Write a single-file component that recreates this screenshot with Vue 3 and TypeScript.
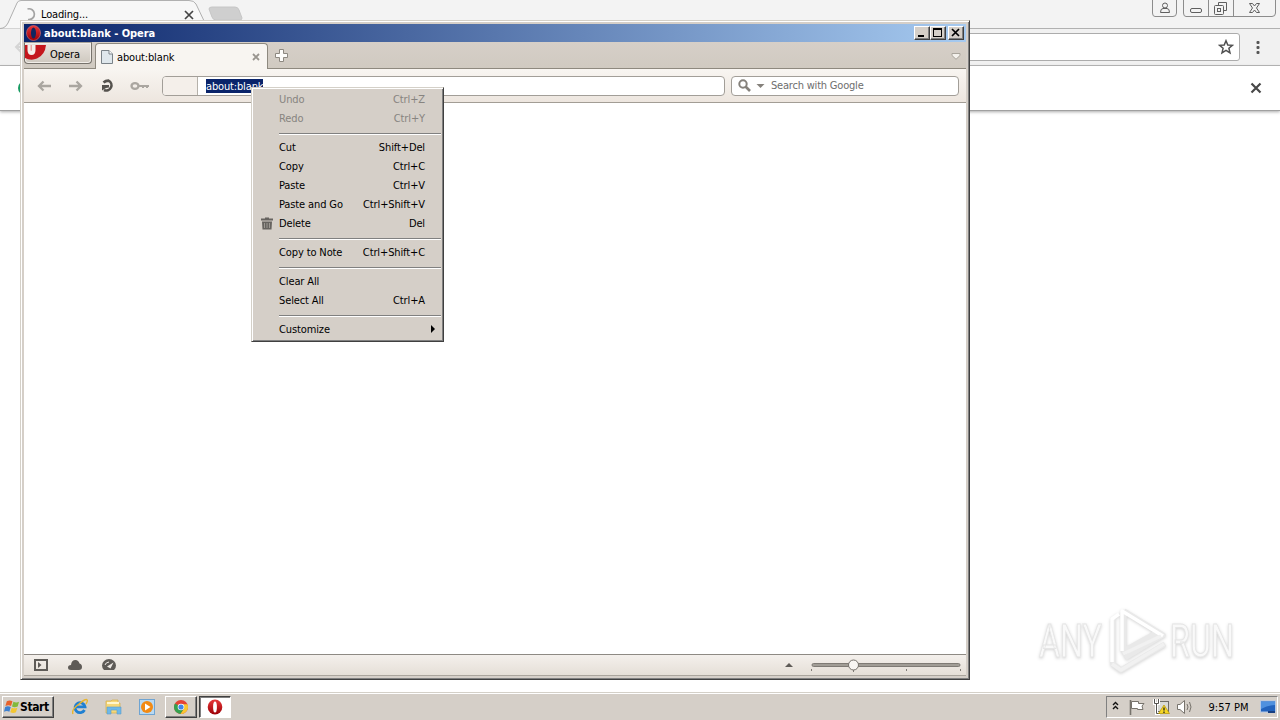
<script setup lang="ts">
interface Entry {
  label?: string
  keys?: string
  off?: boolean
  icon?: boolean
  sub?: boolean
  sep?: boolean
}

const menu: Entry[] = [
  { label: 'Undo', keys: 'Ctrl+Z', off: true },
  { label: 'Redo', keys: 'Ctrl+Y', off: true },
  { sep: true },
  { label: 'Cut', keys: 'Shift+Del' },
  { label: 'Copy', keys: 'Ctrl+C' },
  { label: 'Paste', keys: 'Ctrl+V' },
  { label: 'Paste and Go', keys: 'Ctrl+Shift+V' },
  { label: 'Delete', keys: 'Del', icon: true },
  { sep: true },
  { label: 'Copy to Note', keys: 'Ctrl+Shift+C' },
  { sep: true },
  { label: 'Clear All' },
  { label: 'Select All', keys: 'Ctrl+A' },
  { sep: true },
  { label: 'Customize', sub: true },
]
</script>

<template>
  <div class="desktop">
    <section class="chrome">
      <div class="strip">
        <svg class="strip-art" width="260" height="29" viewBox="0 0 260 29">
          <path d="M0 28.5 L3 28 Q6 27 8 23 L17 3 Q18 .5 21 .5 H189 Q194 .5 196 4 L206 25 Q207 28 210 28.5" fill="#f7f7f7" stroke="#b0b0b0" />
          <path d="M212 7 H235 Q238 7 239 10 L242 18 Q242 20 240 20 H216 Q213 20 212 17 L209 9 Q209 7 212 7Z" fill="#cfcfcf" stroke="#c6c6c6" />
          <path d="M27.500 9 A5.400 5.400 0 1 1 28 19.500" fill="none" stroke="#a3a3a3" stroke-width="1.700" />
          <path d="M185 11 L193 19 M193 11 L185 19" stroke="#444" stroke-width="1.700" />
        </svg>
        <span class="loading">Loading...</span>
        <svg class="caption" width="128" height="18" viewBox="0 0 128 18" fill="none" stroke="#8c8c8c">
          <path d="M.5 0 V13 Q.5 16.500 3 16.500 H21 Q24.500 16.500 24.500 13 V0 M31.500 0 V13 Q31.500 16.500 34 16.500 H120 Q123.500 16.500 123.500 13 V0 M56.500 0 V16 M81.500 0 V16" />
          <g stroke="#5f5f5f">
            <circle cx="13" cy="5.500" r="2.500" /><path d="M8.500 12.500 Q8.500 8.500 11 8.500 H15 Q17.500 8.500 17.500 12.500Z" />
            <rect x="38.500" y="8.500" width="11" height="4" rx="1.500" />
            <path d="M66.500 5.500 V2.500 H74.500 V10.500 H71.500" /><rect x="62.500" y="5.500" width="9" height="9" rx="1" /><rect x="65.500" y="8.500" width="3" height="3" />
            <path d="M97.500 3.500 H100.500 L102.500 6 L104.500 3.500 H107.500 L104.500 8 L107.500 12.500 H104.500 L102.500 10 L100.500 12.500 H97.500 L100.500 8Z" />
          </g>
        </svg>
      </div>
      <div class="cbar">
        <svg class="cback" width="20" height="20" viewBox="0 0 20 20"><path d="M11 3 L4 10 L11 17 M4 10 H18" fill="none" stroke="#d5d5d5" stroke-width="2" /></svg>
        <div class="cinput">
          <svg width="16" height="16" viewBox="0 0 16 16"><path d="M8 1.700 L9.800 6 L14.400 6.300 L10.900 9.300 L12 13.900 L8 11.400 L4 13.900 L5.100 9.300 L1.600 6.300 L6.200 6Z" fill="none" stroke="#505050" stroke-width="1.500" /></svg>
        </div>
        <svg class="dots" width="4" height="14" viewBox="0 0 4 14" fill="#555"><rect x=".5" y="0" width="3" height="3" rx="1" /><rect x=".5" y="5" width="3" height="3" rx="1" /><rect x=".5" y="10" width="3" height="3" rx="1" /></svg>
      </div>
      <div class="info">
        <i class="green"></i>
        <svg width="12" height="12" viewBox="0 0 12 12"><path d="M1.500 1.500 L10.500 10.500 M10.500 1.500 L1.500 10.500" stroke="#484848" stroke-width="2.200" /></svg>
      </div>
    </section>

    <svg class="mark" width="240" height="80" viewBox="0 0 240 80">
      <g fill="none" stroke-linejoin="round">
        <g stroke="#e9e9e9" stroke-width="5.500">
          <path d="M89 8 V49 L123 30 M89 9 L128 33 L90 56 M78 17 V62 L86 68 L130 42" />
        </g>
        <g stroke="#fff" stroke-width="3.500">
          <path d="M77 60 V17 L84 12 M87 49 V9 L128 34" /><path d="M77 62 L86 68 L129 42 M88 52 L126 34" stroke="#f1f1f1" />
        </g>
      </g>
      <g class="mark-text">
        <text x="4" y="55" textLength="63" lengthAdjust="spacingAndGlyphs">ANY</text>
        <text x="135" y="55" textLength="64" lengthAdjust="spacingAndGlyphs">RUN</text>
      </g>
    </svg>

    <section class="opera">
      <header class="title">
        <svg width="16" height="16" viewBox="0 0 16 16"><defs><linearGradient id="red" x2="0" y2="1"><stop stop-color="#e8383a" /><stop offset="1" stop-color="#9c0006" /></linearGradient></defs><ellipse cx="7.500" cy="8" rx="7" ry="7.500" fill="url(#red)" stroke="#d9777c" stroke-width=".6" /><ellipse cx="7.500" cy="8" rx="2.500" ry="5.500" fill="#102660" /></svg>
        <span class="title-text">about:blank - Opera</span>
        <div class="wbtns">
          <b><svg width="14" height="12" viewBox="0 0 14 12"><path d="M3 8h6v2H3z" /></svg></b>
          <b><svg width="14" height="12" viewBox="0 0 14 12"><path d="M2 1h9v9H2z M3 3v6h7V3z" fill-rule="evenodd" /></svg></b>
          <b class="x"><svg width="14" height="12" viewBox="0 0 14 12"><path d="M3 2 L10 9 M10 2 L3 9" stroke="#000" stroke-width="1.700" /></svg></b>
        </div>
      </header>
      <div class="tabs">
        <div class="obtn">
          <svg width="22" height="18" viewBox="0 0 22 18"><path d="M0 2 H21 Q20 12 12 15.500 Q6 18 0 15Z" fill="#c4161c" /><path d="M2.500 2 H10.500 V7 Q10.500 12 6.500 12 Q2.500 12 2.500 7Z" fill="#f4efea" /><path d="M5.500 2 H7 V7 Q7 8 6.300 8 Q5.500 8 5.500 7Z" fill="#e9a9a6" /></svg>
          <span>Opera</span>
        </div>
        <div class="tab">
          <svg width="12" height="14" viewBox="0 0 12 14"><path d="M.5 .5 H8 L11.500 4 V13.500 H.5Z" fill="#dfe7ec" stroke="#7a8288" /><path d="M8 .5 V4 H11.500" fill="#fff" stroke="#7a8288" /></svg>
          <span>about:blank</span>
          <svg class="tx" width="8" height="8" viewBox="0 0 8 8"><path d="M1 1 L7 7 M7 1 L1 7" stroke="#99958f" stroke-width="1.800" /></svg>
        </div>
        <svg class="plus" width="13" height="13" viewBox="0 0 13 13"><path d="M4.500 .5 H8.500 V4.500 H12.500 V8.500 H8.500 V12.500 H4.500 V8.500 H.5 V4.500 H4.500Z" fill="#fdfcfa" stroke="#8d8880" /></svg>
        <svg class="closed" width="10" height="7" viewBox="0 0 10 7"><path d="M1 .5 H9 V2.500 L5 6.300 L1 2.500Z" fill="#f4f1ec" stroke="#a9a49b" /></svg>
      </div>
      <div class="nav">
        <svg class="icons" width="130" height="18" viewBox="0 0 130 18" fill="none">
          <g stroke="#aaa6a0" stroke-width="2.300"><path d="M7.500 4.500 L3 9 L7.500 13.500 M3 9 H15" /><path d="M40.500 4.500 L45 9 L40.500 13.500 M45 9 H33" /></g>
          <g stroke="#aaa6a0" stroke-width="2.300"><ellipse cx="99" cy="9" rx="3.500" ry="2.800" /><path d="M102.500 9 H113 M107 9 V11 M111 9 V11" stroke-width="2" /></g>
          <path d="M67.500 5.500 Q69.500 3.600 72.500 3.600 A5.200 5.200 0 1 1 68 13" stroke="#55524e" stroke-width="2.600" /><path d="M66 13.500 V8 H73 V10.500 L70 11Z" fill="#55524e" />
        </svg>
        <div class="addr"><div class="badge"></div><span class="sel">about:blank</span></div>
        <div class="search">
          <svg width="28" height="14" viewBox="0 0 28 14"><circle cx="5" cy="5" r="3.700" fill="none" stroke="#85817b" stroke-width="2" /><path d="M7.500 7.500 L12 12" stroke="#85817b" stroke-width="2.600" /><path d="M18.500 5 H26.500 L22.500 9Z" fill="#85817b" /></svg>
          <span>Search with Google</span>
        </div>
      </div>
      <main class="page"></main>
      <footer class="status">
        <svg width="90" height="14" viewBox="0 0 90 14" fill="#5e5b57">
          <path d="M0 1H14V13H0Z M2 3V11H12V3Z" fill-rule="evenodd" /><path d="M4 4 L7.500 7 L4 10Z" />
          <path d="M37 12 Q34 12 34 9.500 Q34 7 37 7 Q37.500 2 41.500 2 Q44.500 2 45.500 5.500 Q48 6 48 9 Q48 12 45 12Z" />
          <path d="M70 12 Q68 10 68 7.500 A7 6.500 0 0 1 82 7.500 Q82 10 80 12Z" /><path d="M71 7 Q71.500 4.500 75 4" fill="none" stroke="#eeeae5" /><path d="M73 8.500 L79.500 4.500 L76.500 10.500Z" fill="#eeeae5" />
        </svg>
        <svg class="zoomer" width="180" height="18" viewBox="0 0 180 18">
          <path d="M0 11 L4 7 L8 11Z" fill="#5e5b57" />
          <rect x="27" y="7.500" width="148" height="3" rx="1.500" fill="#a19d96" stroke="#7f7b75" />
          <path d="M26.500 13 V15 M68.500 13 V16 M121.500 13 V15 M175.500 13 V15" stroke="#807c76" />
          <circle cx="68.500" cy="9" r="5" fill="#f8f6f3" stroke="#76726c" />
        </svg>
      </footer>
    </section>

    <nav class="menu">
      <template v-for="(m, i) in menu" :key="i">
        <div v-if="m.sep" class="sep"></div>
        <div v-else class="row" :class="{ off: m.off }">
          <span class="ico"><svg v-if="m.icon" width="12" height="13" viewBox="0 0 12 13" fill="#66635f"><path d="M0 1.500H4V.5H8V1.500H12V3.500H0Z M1 4.500H11L10.500 12.500H1.500Z" /><path d="M3.500 6V11 M6 6V11 M8.500 6V11" stroke="#aaa69f" stroke-width=".8" /></svg></span>
          <span>{{ m.label }}</span>
          <span class="keys">{{ m.keys }}</span>
          <svg v-if="m.sub" class="arrow" width="4" height="8" viewBox="0 0 4 8"><path d="M0 0 L4 4 L0 8Z" /></svg>
        </div>
      </template>
    </nav>

    <footer class="taskbar">
      <div class="start">
        <svg width="16" height="16" viewBox="0 0 17 16"><path d="M3 2 Q6 0 9 2 L7.500 7 Q5 5.500 1.500 7Z" fill="#e8622a" /><path d="M10 2.500 Q13 4 16 2.500 L14.500 7.500 Q11 9 8.500 7.500Z" fill="#82b93c" /><path d="M1.200 8 Q4 6.500 7.200 8 L5.700 13 Q3 11.500 0 13Z" fill="#3e80cf" /><path d="M8.200 8.700 Q11 10 14.200 8.700 L12.700 13.500 Q10 15 6.700 13.500Z" fill="#f3c632" /></svg>
        <span>Start</span>
      </div>
      <svg class="quick" width="84" height="18" viewBox="0 0 84 18">
        <path d="M12.500 12 A5 5 0 1 1 13 8.800 H4.500" fill="none" stroke="#2080d2" stroke-width="2.800" />
        <path d="M1 16 Q-1 12 7 6 Q14 0 15 2 Q16 3 14 6" fill="none" stroke="#e9b52c" stroke-width="1.400" />
        <path d="M34 3 H39 L40 2 H46 V5 H48 V15 H34Z" fill="#f5d879" stroke="#d5ad48" stroke-width=".7" /><path d="M35 5 H47" stroke="#fff6cc" stroke-width="2" /><path d="M35 16 V9 H49 V16 H45 V12 H39 V16Z" fill="#6db8e8" stroke="#5b9cca" stroke-width=".6" />
        <rect x="67.500" y="1.500" width="15" height="15" fill="#b9d9f2" stroke="#6fa4d2" /><circle cx="75" cy="9" r="6" fill="#f28a14" /><path d="M73 5.500 L78.500 9 L73 12.500Z" fill="#fff" />
      </svg>
      <div class="task">
        <svg width="14" height="14" viewBox="0 0 14 14"><circle cx="7" cy="7" r="7" fill="#e54335" /><path d="M7 7 L1 3.400 A7 7 0 0 0 6.500 14 L10 8.700Z" fill="#34a14f" /><path d="M7 7 L10 8.700 L6.500 14 A7 7 0 0 0 13.400 4.200 H7Z" fill="#f8c831" /><circle cx="7" cy="7" r="3.300" fill="#fff" /><circle cx="7" cy="7" r="2.600" fill="#4285e8" /></svg>
      </div>
      <div class="task on">
        <svg width="16" height="16" viewBox="0 0 16 16"><ellipse cx="8" cy="8" rx="7.300" ry="7.500" fill="url(#red)" /><ellipse cx="8" cy="8" rx="1.900" ry="5.500" fill="#fff" /></svg>
      </div>
      <div class="tray">
        <svg width="86" height="18" viewBox="0 0 86 18" fill="none">
          <path d="M2 7 L4.500 4.500 L7 7 M2 11 L4.500 8.500 L7 11" stroke="#111" stroke-width="1.400" />
          <path d="M19.500 2 V17" stroke="#77736c" stroke-width="1.600" /><path d="M20.500 3.500 H27.500 V5.500 H33 L31 8 L32 11.500 H26.500 V10.500 H20.500Z" fill="#fff" stroke="#77736c" />
          <rect x="46.500" y="3.500" width="11" height="10" fill="#d9dad6" stroke="#6d6b66" /><path d="M43.500 1 V5.500 H47.500 V1 M45.500 6 V15.500 H49" stroke="#fff" stroke-width="3" /><path d="M43.500 1 V5.500 H47.500 V1 M45.500 6 V15.500 H49" stroke="#55534f" /><path d="M53 7 L58.500 15.500 H47.500Z" fill="#f7d724" stroke="#b49400" stroke-width=".7" /><path d="M53 9.500 V12.500 M53 13.500 V15" stroke="#222" stroke-width="1.300" />
          <path d="M66.500 6.500 H69 L73.500 2.500 V15.500 L69 11.500 H66.500Z" fill="#fff" stroke="#77736c" /><path d="M76 6 Q78 9 76 12 M78.500 4 Q81.500 9 78.500 14" stroke="#77736c" />
        </svg>
        <span class="clock">9:57 PM</span>
        <svg width="16" height="14" viewBox="0 0 16 14"><rect x=".5" y="1" width="15" height="11" fill="#2263bd" stroke="#b3c8e6" /><path d="M1 1.500 H15 V5 Q8 5 1 9Z" fill="#4f91df" /><path d="M8 11 H15 V13 H8Z" fill="#173f82" /></svg>
      </div>
    </footer>
  </div>
</template>

<style>
body { margin: 0; overflow: hidden; }
</style>

<style scoped>
.desktop { position: relative; width: 1280px; height: 720px; overflow: hidden; background: #fff; font: 11px/14px "DejaVu Sans Condensed", "DejaVu Sans", sans-serif; letter-spacing: -0.12px; color: #000; }
.desktop * { box-sizing: border-box; }
svg { display: block; flex: none; }
span { white-space: nowrap; }
.chrome { height: 692px; }
.strip { height: 29px; background: #f3f3f3; border-bottom: 1px solid #b1b1b1; display: flex; position: relative; }
.strip-art { position: absolute; left: 0; top: 0; }
.loading { margin: 8px 0 0 41px; position: relative; letter-spacing: -0.15px; }
.caption { margin-left: auto; }
.cbar { height: 37px; background: #f1f1f1; border-bottom: 1px solid #b3b3b3; display: flex; align-items: center; padding-right: 20px; }
.cback { margin-left: 12px; }
.cinput { flex: 1; height: 28px; margin-left: 60px; border: 1px solid #acacac; border-radius: 3px; background: #fff; display: flex; align-items: center; justify-content: flex-end; padding-right: 5px; }
.dots { margin: 2px 0 0 16px; }
.info { height: 45px; display: flex; align-items: center; justify-content: space-between; padding: 0 18px; border-bottom: 1px solid #a0a0a0; box-shadow: 0 1px 3px #aaa; }
.green { width: 14px; height: 14px; border-radius: 50%; background: #169b62; }
.mark { position: absolute; left: 1035px; top: 602px; filter: drop-shadow(0 1px 1.5px #d4d4d4); }
.mark-text { font: 46px/50px "Roboto", sans-serif; letter-spacing: 0; fill: #f9f9f9; stroke: #e6e6e6; stroke-width: 1; }
.opera { position: absolute; left: 20px; top: 20px; width: 950px; height: 660px; display: flex; flex-direction: column; background: #d5cfc8; border: 1px solid; border-color: #d4d0c8 #404040 #404040 #d4d0c8; box-shadow: inset 1px 1px #fff, inset -1px -1px #808080; padding: 3px 3px 3px; }
.title { height: 18px; flex: none; display: flex; align-items: center; background: linear-gradient(90deg, #0a246a, #a6caf0); color: #fff; padding: 0 2px; }
.title-text { font-weight: bold; margin: 1px 0 0 2px; letter-spacing: -0.03px; }
.wbtns { margin-left: auto; display: flex; }
.wbtns b { width: 16px; height: 14px; background: #d5cfc8; border: 1px solid; border-color: #fff #404040 #404040 #fff; box-shadow: inset -1px -1px #808080; }
.wbtns .x { margin-left: 2px; }
.tabs { height: 27px; flex: none; background: linear-gradient(#d6cfc8, #d0cac1); border-bottom: 1px solid #8e897f; display: flex; position: relative; }
.obtn { width: 68px; height: 22px; border: 1px solid #77736c; border-top-color: #aaa59c; border-radius: 0 0 4px 4px; box-shadow: inset 0 0 0 1px #f2eee9; background: linear-gradient(#e9e4de, #cec8bf); display: flex; }
.obtn span { margin: 5px 0 0 3px; letter-spacing: -0.05px; }
.tab { width: 173px; height: 26px; margin: 1px 0 -1px 3px; border: 1px solid #8e897f; border-bottom: 0; border-radius: 4px 4px 0 0; background: #f8f5f1; display: flex; align-items: center; padding: 0 7px 0 5px; position: relative; }
.tab span { margin-left: 4px; margin-top: 2px; letter-spacing: -0.15px; }
.tx { margin-left: auto; }
.plus { margin: 7px 0 0 7px; }
.closed { margin: 11px 5px 0 auto; }
.nav { height: 34px; flex: none; background: linear-gradient(#f8f5f1, #ede6df); border-bottom: 1px solid #a29d95; display: flex; align-items: center; padding: 0 7px 0 12px; }
.icons { margin-right: -4px; }
.addr { width: 563px; height: 20px; border: 1px solid #a29e98; border-radius: 4px; background: #fff; display: flex; align-items: center; overflow: hidden; }
.badge { width: 35px; height: 18px; background: #f4efea; border-right: 1px solid #b5b1aa; }
.sel { margin-left: 8px; background: #0a246a; color: #fff; height: 14px; line-height: 15px; letter-spacing: -0.15px; }
.search { margin-left: 6px; width: 228px; height: 20px; border: 1px solid #a29e98; border-radius: 4px; background: #fff; display: flex; align-items: center; padding-left: 6px; color: #6e6e6e; }
.search span { margin: 1px 0 0 5px; letter-spacing: -0.2px; }
.page { flex: 1; background: #fff; }
.status { height: 22px; flex: none; border-top: 1px solid #8e8a84; border-bottom: 1px solid #aaa59d; background: linear-gradient(#f4f0ec, #e5dfd7); display: flex; align-items: center; justify-content: space-between; padding: 0 1px 0 10px; }
.menu { position: absolute; left: 251px; top: 87px; width: 193px; height: 255px; background: #d5cfc8; border: 1px solid; border-color: #d4d0c8 #404040 #404040 #d4d0c8; box-shadow: inset 1px 1px #fff, inset -1px -1px #808080; padding: 2px; }
.row { height: 19px; display: flex; align-items: center; padding: 0 5px 0 7px; }
.row.off { color: #878480; }
.ico { width: 18px; }
.keys { margin-left: auto; padding-right: 11px; }
.arrow { margin: -2px 1px 0 0; }
.sep { height: 10px; padding-top: 5px; margin-left: 25px; }
.sep::after { content: ""; display: block; height: 0; border-top: 1px solid #808080; border-bottom: 1px solid #fff; }
.taskbar { position: absolute; left: 0; top: 692px; width: 1280px; height: 28px; background: #d5cfc8; border-top: 1px solid #d4d0c8; box-shadow: inset 0 1px #fff; display: flex; align-items: flex-start; padding: 3px 2px 0; }
.start, .task { height: 22px; border: 1px solid; border-color: #fff #404040 #404040 #fff; box-shadow: inset -1px -1px #808080; display: flex; align-items: center; }
.start { width: 52px; font-weight: bold; padding-left: 1px; }
.start span { font-size: 12px; letter-spacing: -0.4px; }
.quick { margin: 2px 9px 0 18px; }
.task { width: 32px; justify-content: center; margin-right: 2px; }
.task.on { background: #fff; border-color: #404040 #fff #fff #404040; box-shadow: inset 1px 1px #808080; }
.tray { margin-left: auto; width: 172px; height: 22px; border: 1px solid; border-color: #808080 #fff #fff #808080; display: flex; align-items: center; padding: 0 1px 0 4px; }
.clock { margin: 1px auto 0 auto; letter-spacing: 0; }
</style>
